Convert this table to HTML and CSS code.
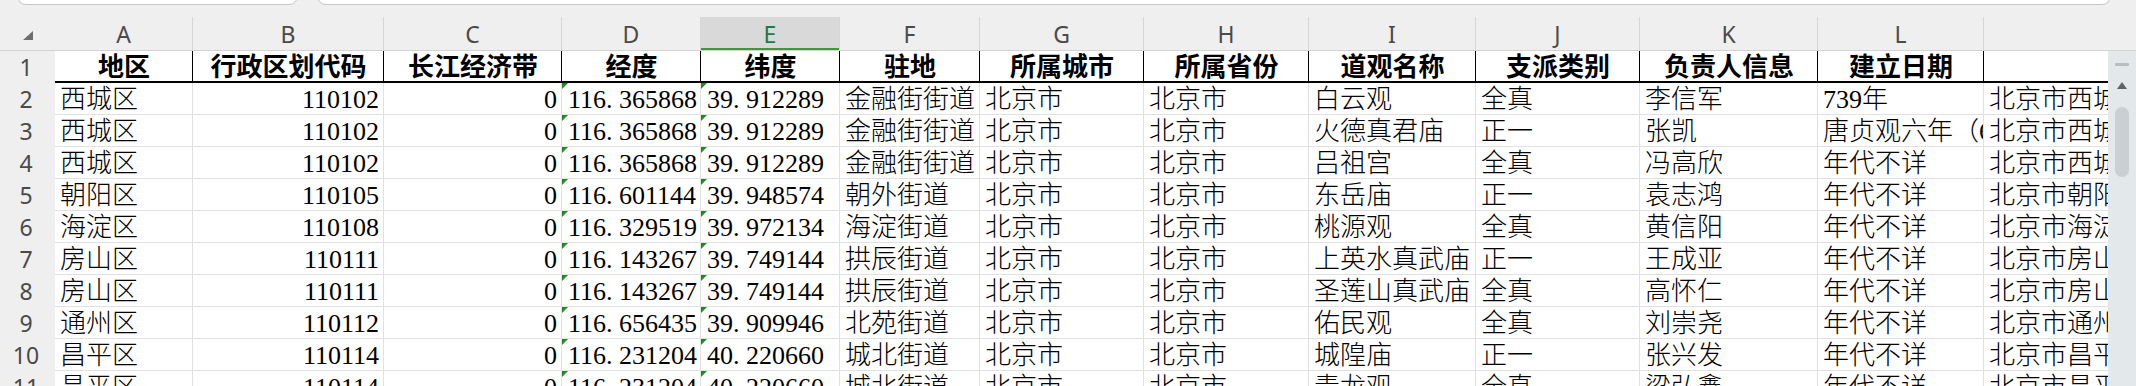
FILE: index.html
```html
<!DOCTYPE html>
<html lang="zh-CN">
<head>
<meta charset="utf-8">
<title>道观数据表</title>
<link rel="stylesheet" href="styles.css">
</head>
<body>
<div class="topbar">
  <div class="box namebox"></div>
  <div class="box formulabox"></div>
</div>
<div class="colhead">
  <div class="corner"><svg width="10" height="9" viewBox="0 0 10 9"><polygon points="10,0 10,9 0,9" fill="#6e6e6e"/></svg></div>
  <div class="ch">A</div>
  <div class="ch">B</div>
  <div class="ch">C</div>
  <div class="ch">D</div>
  <div class="ch sel">E</div>
  <div class="ch">F</div>
  <div class="ch">G</div>
  <div class="ch">H</div>
  <div class="ch">I</div>
  <div class="ch">J</div>
  <div class="ch">K</div>
  <div class="ch">L</div>
  <div class="ch last"></div>
</div>
<div class="main">
  <div class="sheet">
    <div class="row hdr">
      <div class="rh">1</div>
      <div class="c">地区</div>
      <div class="c">行政区划代码</div>
      <div class="c">长江经济带</div>
      <div class="c">经度</div>
      <div class="c">纬度</div>
      <div class="c">驻地</div>
      <div class="c">所属城市</div>
      <div class="c">所属省份</div>
      <div class="c">道观名称</div>
      <div class="c">支派类别</div>
      <div class="c">负责人信息</div>
      <div class="c">建立日期</div>
      <div class="c m"></div>
    </div>
    <div class="row">
      <div class="rh">2</div>
      <div class="c">西城区</div>
      <div class="c r">110102</div>
      <div class="c r">0</div>
      <div class="c t">116<span class="dot">.</span>365868</div>
      <div class="c t">39<span class="dot">.</span>912289</div>
      <div class="c">金融街街道</div>
      <div class="c">北京市</div>
      <div class="c">北京市</div>
      <div class="c">白云观</div>
      <div class="c">全真</div>
      <div class="c">李信军</div>
      <div class="c">739年</div>
      <div class="c m">北京市西城</div>
    </div>
    <div class="row">
      <div class="rh">3</div>
      <div class="c">西城区</div>
      <div class="c r">110102</div>
      <div class="c r">0</div>
      <div class="c t">116<span class="dot">.</span>365868</div>
      <div class="c t">39<span class="dot">.</span>912289</div>
      <div class="c">金融街街道</div>
      <div class="c">北京市</div>
      <div class="c">北京市</div>
      <div class="c">火德真君庙</div>
      <div class="c">正一</div>
      <div class="c">张凯</div>
      <div class="c">唐贞观六年（6</div>
      <div class="c m">北京市西城</div>
    </div>
    <div class="row">
      <div class="rh">4</div>
      <div class="c">西城区</div>
      <div class="c r">110102</div>
      <div class="c r">0</div>
      <div class="c t">116<span class="dot">.</span>365868</div>
      <div class="c t">39<span class="dot">.</span>912289</div>
      <div class="c">金融街街道</div>
      <div class="c">北京市</div>
      <div class="c">北京市</div>
      <div class="c">吕祖宫</div>
      <div class="c">全真</div>
      <div class="c">冯高欣</div>
      <div class="c">年代不详</div>
      <div class="c m">北京市西城</div>
    </div>
    <div class="row">
      <div class="rh">5</div>
      <div class="c">朝阳区</div>
      <div class="c r">110105</div>
      <div class="c r">0</div>
      <div class="c t">116<span class="dot">.</span>601144</div>
      <div class="c t">39<span class="dot">.</span>948574</div>
      <div class="c">朝外街道</div>
      <div class="c">北京市</div>
      <div class="c">北京市</div>
      <div class="c">东岳庙</div>
      <div class="c">正一</div>
      <div class="c">袁志鸿</div>
      <div class="c">年代不详</div>
      <div class="c m">北京市朝阳</div>
    </div>
    <div class="row">
      <div class="rh">6</div>
      <div class="c">海淀区</div>
      <div class="c r">110108</div>
      <div class="c r">0</div>
      <div class="c t">116<span class="dot">.</span>329519</div>
      <div class="c t">39<span class="dot">.</span>972134</div>
      <div class="c">海淀街道</div>
      <div class="c">北京市</div>
      <div class="c">北京市</div>
      <div class="c">桃源观</div>
      <div class="c">全真</div>
      <div class="c">黄信阳</div>
      <div class="c">年代不详</div>
      <div class="c m">北京市海淀</div>
    </div>
    <div class="row">
      <div class="rh">7</div>
      <div class="c">房山区</div>
      <div class="c r">110111</div>
      <div class="c r">0</div>
      <div class="c t">116<span class="dot">.</span>143267</div>
      <div class="c t">39<span class="dot">.</span>749144</div>
      <div class="c">拱辰街道</div>
      <div class="c">北京市</div>
      <div class="c">北京市</div>
      <div class="c">上英水真武庙</div>
      <div class="c">正一</div>
      <div class="c">王成亚</div>
      <div class="c">年代不详</div>
      <div class="c m">北京市房山</div>
    </div>
    <div class="row">
      <div class="rh">8</div>
      <div class="c">房山区</div>
      <div class="c r">110111</div>
      <div class="c r">0</div>
      <div class="c t">116<span class="dot">.</span>143267</div>
      <div class="c t">39<span class="dot">.</span>749144</div>
      <div class="c">拱辰街道</div>
      <div class="c">北京市</div>
      <div class="c">北京市</div>
      <div class="c">圣莲山真武庙</div>
      <div class="c">全真</div>
      <div class="c">高怀仁</div>
      <div class="c">年代不详</div>
      <div class="c m">北京市房山</div>
    </div>
    <div class="row">
      <div class="rh">9</div>
      <div class="c">通州区</div>
      <div class="c r">110112</div>
      <div class="c r">0</div>
      <div class="c t">116<span class="dot">.</span>656435</div>
      <div class="c t">39<span class="dot">.</span>909946</div>
      <div class="c">北苑街道</div>
      <div class="c">北京市</div>
      <div class="c">北京市</div>
      <div class="c">佑民观</div>
      <div class="c">全真</div>
      <div class="c">刘崇尧</div>
      <div class="c">年代不详</div>
      <div class="c m">北京市通州</div>
    </div>
    <div class="row">
      <div class="rh">10</div>
      <div class="c">昌平区</div>
      <div class="c r">110114</div>
      <div class="c r">0</div>
      <div class="c t">116<span class="dot">.</span>231204</div>
      <div class="c t">40<span class="dot">.</span>220660</div>
      <div class="c">城北街道</div>
      <div class="c">北京市</div>
      <div class="c">北京市</div>
      <div class="c">城隍庙</div>
      <div class="c">正一</div>
      <div class="c">张兴发</div>
      <div class="c">年代不详</div>
      <div class="c m">北京市昌平</div>
    </div>
    <div class="row">
      <div class="rh">11</div>
      <div class="c">昌平区</div>
      <div class="c r">110114</div>
      <div class="c r">0</div>
      <div class="c t">116<span class="dot">.</span>231204</div>
      <div class="c t">40<span class="dot">.</span>220660</div>
      <div class="c">城北街道</div>
      <div class="c">北京市</div>
      <div class="c">北京市</div>
      <div class="c">青龙观</div>
      <div class="c">全真</div>
      <div class="c">梁弘鑫</div>
      <div class="c">年代不详</div>
      <div class="c m">北京市昌平</div>
    </div>
  </div>
  <div class="vscroll">
    <div class="vs-dash"></div>
    <svg class="vs-up" width="10" height="7" viewBox="0 0 10 7"><polygon points="5,0 10,7 0,7" fill="#5f6366"/></svg>
    <div class="vs-thumb"></div>
  </div>
</div>
</body>
</html>
```

FILE: styles.css
```css
* { box-sizing: border-box; }

html, body {
  margin: 0;
  padding: 0;
  width: 2136px;
  height: 386px;
  overflow: hidden;
  background: #efefef;
}

body {
  font-family: "Liberation Serif", "Noto Sans CJK SC", serif;
  color: #000;
}

/* top: name box + formula bar edges */
.topbar {
  height: 17px;
  display: flex;
  gap: 19px;
  padding-left: 17px;
  overflow: hidden;
}
.box {
  margin-top: -20px;
  height: 25px;
  background: #fff;
  border: 1px solid #c6c6c6;
  border-radius: 0 0 9px 9px;
}
.namebox { width: 281px; }
.formulabox { width: 1794px; }

/* column letters */
.colhead {
  height: 34px;
  display: grid;
  grid-template-columns: 55px 138px 191px 178px 139px 139px 140px 164px 165px 167px 164px 178px 166px 1fr;
  border-bottom: 1px solid #d3d3d3;
  background: #efefef;
}
.corner {
  display: flex;
  align-items: center;
  justify-content: center;
  padding-top: 3px;
}
.ch {
  border-right: 1px solid #d6d6d6;
  font-family: "Noto Sans", "Liberation Sans", sans-serif;
  font-size: 23px;
  color: #4a4a4a;
  display: flex;
  align-items: center;
  justify-content: center;
}
.ch.last { border-right: none; }
.ch.sel {
  background: #d9d9d9;
  color: #1d7a47;
  box-shadow: inset 0 -2px 0 #3d983a;
}

/* sheet body */
.main {
  display: flex;
  height: 335px;
}
.sheet {
  flex: 1;
  overflow: hidden;
  background: #fff;
}
.row {
  display: grid;
  grid-template-columns: 55px 138px 191px 178px 139px 139px 140px 164px 165px 167px 164px 178px 166px 1fr;
  height: 32px;
}
.rh {
  background: #efefef;
  border-bottom: 1px solid #dcdcdc;
  font-family: "Noto Sans", "Liberation Sans", sans-serif;
  font-size: 23px;
  color: #4a4a4a;
  display: flex;
  align-items: center;
  justify-content: center;
  padding-right: 3px;
}
.c {
  position: relative;
  height: 32px;
  border-right: 1px solid #e1e1e1;
  border-bottom: 1px solid #e1e1e1;
  padding: 3px 4px 0 5px;
  font-size: 26px;
  font-weight: 300;
  line-height: 28px;
  white-space: nowrap;
  overflow: hidden;
}
.c.r { text-align: right; }
.c.t { padding-left: 6px; }
.c.t::before {
  content: "";
  position: absolute;
  top: 0;
  left: 0;
  width: 0;
  height: 0;
  border-top: 6px solid #1f8a24;
  border-right: 6px solid transparent;
}
.c.m { border-right: none; }
.dot {
  display: inline-block;
  width: 13px;
  text-align: left;
}

.row.hdr .c {
  border-right: 1px solid #000;
  border-bottom: 2px solid #000;
  font-weight: 700;
  text-align: center;
}
.row.hdr .c.m { border-right: none; }

/* vertical scrollbar */
.vscroll {
  width: 28px;
  background: #e3e8ea;
  display: flex;
  flex-direction: column;
  align-items: center;
}
.vs-dash {
  width: 14px;
  height: 3px;
  background: #b8bdc0;
  border-radius: 1px;
  margin-top: 12px;
}
.vs-up {
  margin-top: 16px;
  display: block;
}
.vs-thumb {
  margin-top: 18px;
  width: 14px;
  height: 70px;
  border-radius: 7px;
  background: #c9cfd2;
}
```
